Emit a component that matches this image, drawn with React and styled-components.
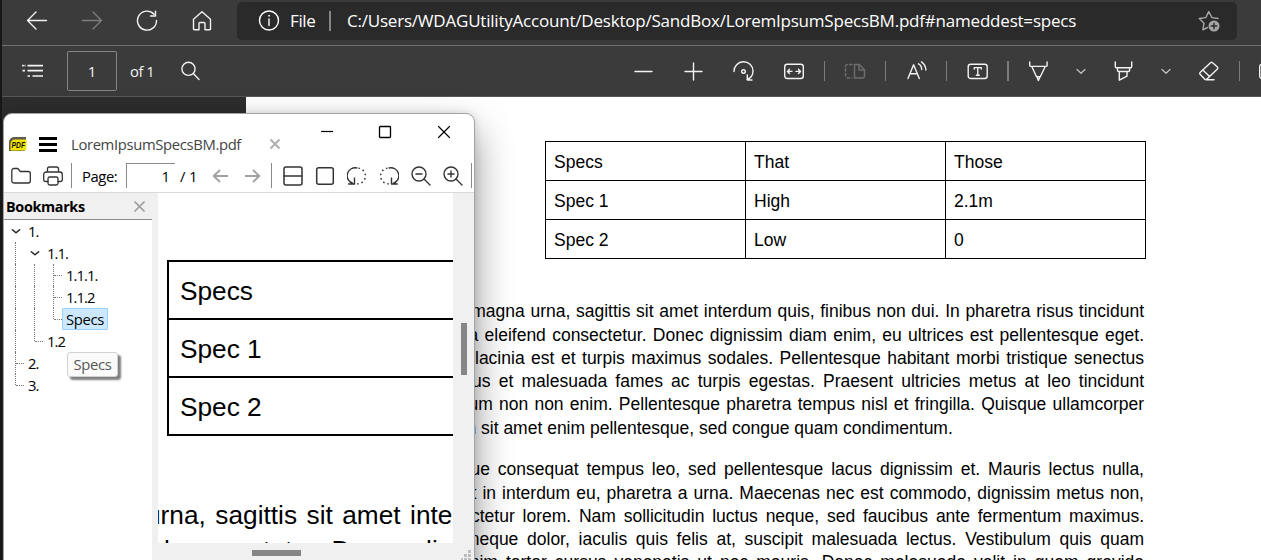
import React from 'react';
import styled, { createGlobalStyle, css } from 'styled-components';

const GlobalStyle = createGlobalStyle`
  * { box-sizing: border-box; }
  body {
    margin: 0;
    overflow: hidden;
    background: #2d2d2d;
  }
`;

const uiFont = '"Open Sans", "Noto Sans", sans-serif';
const docFont = '"Liberation Sans", Arial, sans-serif';

/* ---------- browser ---------- */

const Browser = styled.div`
  position: relative;
  display: flex;
  flex-direction: column;
  width: 1261px;
  height: 560px;
  overflow: hidden;
  border-left: 2px solid #171717;
  background: #2d2d2d;
  font-family: ${uiFont};
`;

const NavBar = styled.div`
  display: flex;
  flex: none;
  height: 46px;
  padding: 2px 24px 0 24px;
  border-bottom: 1px solid #6e6e6e;
  background: #3b3b3b;
`;

const NavButtons = styled.div`
  display: flex;
  gap: 33px;
  width: 211px;
  padding-top: 8px;
  color: #f2f2f2;
`;

const AddressBar = styled.div`
  display: flex;
  align-items: center;
  flex: 1;
  height: 38px;
  padding: 0 17px 0 21px;
  border-radius: 5px;
  background: #2a2a2a;
  color: #fff;
  font-size: 17px;
  white-space: nowrap;
`;

const Scheme = styled.span`
  width: 41px;
  margin-left: 10px;
  padding-bottom: 1px;
  letter-spacing: -0.35px;
  border-right: 2px solid #858585;
  line-height: 19px;
`;

const Address = styled.span`
  flex: 1;
  margin-left: 16px;
  padding-bottom: 2px;
  letter-spacing: -0.21px;
`;

const Toolbar = styled.div`
  display: flex;
  align-items: center;
  flex: none;
  height: 51px;
  overflow: hidden;
  border-bottom: 1px solid #575757;
  background: #3b3b3b;
  color: #f2f2f2;
`;

const Glyph = styled.svg`
  display: block;
  flex: none;
  width: ${(p) => p.$size || 22}px;
  height: ${(p) => p.$size || 22}px;
  margin-left: ${(p) => p.$gap || 0}px;
  color: ${(p) => p.$color || 'inherit'};
  fill: none;
  stroke: currentColor;
  stroke-width: ${(p) => p.$weight || 1.4};
  stroke-linecap: ${(p) => p.$cap || 'round'};
  stroke-linejoin: round;
`;

const Divider = styled.span`
  flex: none;
  width: ${(p) => p.$width || 1}px;
  height: ${(p) => p.$height || 20}px;
  margin-left: ${(p) => p.$gap || 0}px;
  background: ${(p) => p.$color || '#7c7c7c'};
`;

const PageBox = styled.div`
  flex: none;
  width: 50px;
  height: 40px;
  margin: 0 13px 0 23px;
  border: 1px solid #858585;
  border-radius: 2px;
  font-size: 15px;
  line-height: 38px;
  text-align: center;
`;

const PageCount = styled.span`
  flex: none;
  width: 49px;
  font-size: 14.8px;
  letter-spacing: -0.45px;
`;

const Viewer = styled.div`
  flex: 1;
  padding-left: 244px;
  overflow: hidden;
`;

const Paper = styled.div`
  height: 600px;
  padding: 44px 117px 0 0;
  background: #fff;
  color: #000;
  font: 17.5px/23.25px ${docFont};
`;

const SpecTable = styled.div`
  width: 601px;
  margin: 0 -2px 41.3px auto;
  border: solid #000;
  border-width: 1px 0 0 1px;
`;

const SpecRow = styled.div`
  display: grid;
  grid-template-columns: repeat(3, 200px);
  height: 39px;
`;

const SpecCell = styled.div`
  padding: 9px 8px 0;
  border: solid #000;
  border-width: 0 1px 1px 0;
`;

const Paragraph = styled.div`
  margin-bottom: 18.5px;
`;

const Line = styled.div`
  display: flex;
  justify-content: flex-end;
  white-space: pre;
  word-spacing: ${(p) => p.$gap}px;
  padding-right: ${(p) => p.$indent || 0}px;
`;

/* ---------- reader window ---------- */

const Window = styled.div`
  position: absolute;
  left: 1px;
  top: 113px;
  display: flex;
  flex-direction: column;
  width: 472px;
  height: 470px;
  border: 1px solid #a3a3a3;
  border-radius: 9px;
  background: #fff;
  color: #000;
  font-size: 14.8px;
  box-shadow: 0 18px 38px rgba(0, 0, 0, 0.42), 0 0 10px rgba(0, 0, 0, 0.12);
`;

const TitleBar = styled.div`
  display: flex;
  flex: none;
  height: 46px;
`;

const TabArea = styled.div`
  display: flex;
  align-items: center;
  width: 293px;
  height: 28px;
  margin-top: 16px;
  padding-left: 4px;
`;

const MenuBars = styled.div`
  width: 18px;
  height: 15px;
  margin: 0 14px 0 12px;
  border: solid #000;
  border-width: 3px 0;
  background: linear-gradient(#fff 3px, #000 3px, #000 6px, #fff 6px);
`;

const TabName = styled.span`
  width: 197px;
  color: #444;
  letter-spacing: -0.34px;
`;

const Controls = styled.div`
  display: flex;
  align-items: center;
  gap: 44.5px;
  height: 36px;
  margin-left: 22.5px;
`;

const ReaderBar = styled.div`
  display: flex;
  align-items: center;
  flex: none;
  height: 33px;
  padding: 0 0 1px 7px;
  border-bottom: 1px solid #d9d9d9;
  color: #333;
`;

const PageLabel = styled.span`
  width: 44px;
  margin-left: 10px;
  color: #000;
  letter-spacing: -0.4px;
`;

const PageField = styled.div`
  width: 49px;
  height: 25px;
  padding-right: 5px;
  border: solid #8a8a8a;
  border-width: 1px 0 0 1px;
  color: #000;
  line-height: 25px;
  text-align: right;
`;

const PageTotal = styled.span`
  width: 36px;
  padding-left: 5px;
  color: #000;
  letter-spacing: -0.1px;
`;

const Body = styled.div`
  display: flex;
  flex: 1;
  background: #f0f0f0;
  overflow: hidden;
`;

const Sidebar = styled.div`
  display: flex;
  flex-direction: column;
  width: 148px;
`;

const SidebarTitle = styled.div`
  display: flex;
  align-items: center;
  justify-content: space-between;
  height: 27px;
  padding: 0 6px 0 2px;
  border-bottom: 1px solid #8c8c8c;
  font-size: 14.4px;
  font-weight: 700;
  letter-spacing: -0.35px;
`;

const Tree = styled.div`
  flex: 1;
  padding-left: 2px;
  background: #fff;
`;

const TreeRow = styled.div`
  display: flex;
  align-items: center;
  height: 22px;
`;

const Guide = styled.span`
  position: relative;
  width: 19px;
  height: 22px;

  &::before {
    content: '';
    position: absolute;
    left: 9px;
    top: 0;
    height: ${(p) => (p.$kind === 'end' ? 11 : 22)}px;
    border-left: 1px dotted #777;
  }

  ${(p) =>
    p.$kind !== 'pass' &&
    css`
      &::after {
        content: '';
        position: absolute;
        left: 10px;
        top: 11px;
        width: 8px;
        border-top: 1px dotted #777;
      }
    `}
`;

const Twisty = styled.span`
  display: flex;
  align-items: center;
  justify-content: center;
  width: 19px;
`;

const NodeLabel = styled.span`
  height: 22px;
  margin-left: -1px;
  padding: 0 3px;
  border: 1px solid ${(p) => (p.$selected ? '#99d1ff' : 'transparent')};
  border-radius: 1px;
  background: ${(p) => (p.$selected ? '#cce8ff' : 'transparent')};
  letter-spacing: ${(p) => (p.$selected ? -0.35 : -0.95)}px;
  line-height: 20px;
`;

const Tooltip = styled.div`
  position: absolute;
  left: 63px;
  top: 238px;
  width: 51px;
  height: 25px;
  border: 1px solid #d2d2d2;
  border-radius: 3px;
  background: #fafafa;
  box-shadow: 3px 3px 2px rgba(0, 0, 0, 0.5);
  color: #575757;
  letter-spacing: -0.35px;
  line-height: 23px;
  text-align: center;
`;

const CanvasColumn = styled.div`
  width: 295px;
  margin-left: 6px;
`;

const Canvas = styled.div`
  height: 350px;
  padding-top: 67px;
  overflow: hidden;
  background: #fff;
  font: 26.25px/35px ${docFont};
`;

const ZoomTable = styled.div`
  width: 400px;
  margin: 0 0 62px 9px;
  border: solid #000;
  border-width: 2px 0 0 2px;
`;

const ZoomCell = styled.div`
  height: 58px;
  padding: 12px 0 0 11px;
  border-bottom: 2px solid #000;
`;

const ZoomLine = styled.div`
  margin-left: ${(p) => p.$shift}px;
  word-spacing: ${(p) => p.$gap}px;
  white-space: nowrap;
`;

const HThumb = styled.div`
  width: 49px;
  height: 6px;
  margin: 7px 0 0 94px;
  background: #868686;
`;

const ScrollColumn = styled.div`
  display: flex;
  flex: 1;
  flex-direction: column;
  padding: 130px 0 0 8px;
`;

const VThumb = styled.div`
  width: 6px;
  height: 52px;
  margin-bottom: 175px;
  background: #868686;
`;

const rows = [
  ['Specs', 'That', 'Those'],
  ['Spec 1', 'High', '2.1m'],
  ['Spec 2', 'Low', '0'],
];

const paragraphs = [
  [
    { gap: 0.79, text: 'magna urna, sagittis sit amet interdum quis, finibus non dui. In pharetra risus tincidunt' },
    { gap: 1.45, text: 'a eleifend consectetur. Donec dignissim diam enim, eu ultrices est pellentesque eget.' },
    { gap: 1.63, text: 'lacinia est et turpis maximus sodales. Pellentesque habitant morbi tristique senectus' },
    { gap: 3.3, text: 'netus et malesuada fames ac turpis egestas. Praesent ultricies metus at leo tincidunt' },
    { gap: 1.37, text: 'ipsum non non enim. Pellentesque pharetra tempus nisl et fringilla. Quisque ullamcorper' },
    { gap: 0, indent: 191.2, text: 'non sit amet enim pellentesque, sed congue quam condimentum.' },
  ],
  [
    { gap: 3.04, text: 'neque consequat tempus leo, sed pellentesque lacus dignissim et. Mauris lectus nulla,' },
    { gap: 1.14, text: 't in interdum eu, pharetra a urna. Maecenas nec est commodo, dignissim metus non,' },
    { gap: 2.91, text: 'consectetur lorem. Nam sollicitudin luctus neque, sed faucibus ante fermentum maximus.' },
    { gap: 3.82, text: 'neque dolor, iaculis quis felis at, suscipit malesuada lectus. Vestibulum quis quam' },
    { gap: 3.18, text: 'enim tortor cursus venenatis ut nec mauris. Donec malesuada velit in quam gravida' },
  ],
];

const bookmarks = [
  { label: '1.', guides: [], open: true },
  { label: '1.1.', guides: ['pass'], open: true },
  { label: '1.1.1.', guides: ['pass', 'pass', 'tee'] },
  { label: '1.1.2', guides: ['pass', 'pass', 'tee'] },
  { label: 'Specs', guides: ['pass', 'pass', 'end'], selected: true },
  { label: '1.2', guides: ['pass', 'end'] },
  { label: '2.', guides: ['tee'] },
  { label: '3.', guides: ['end'] },
];

const Chevron = ({ gap }) => (
  <Glyph $size={12} $gap={gap} $weight={1.2} $color="#c4c4c4" viewBox="0 0 12 12">
    <path d="M2 4.5 6 8.3 10 4.5" />
  </Glyph>
);

const BrowserNav = () => (
  <NavBar>
    <NavButtons>
      <Glyph viewBox="0 0 22 22"><path d="M20.5 10.5H1.5M10 2 1.5 10.5 10 19" /></Glyph>
      <Glyph $color="#7d7d7d" viewBox="0 0 22 22"><path d="M1.5 10.5h19M12 2l8.5 8.5L12 19" /></Glyph>
      <Glyph viewBox="0 0 22 22">
        <path d="M20.5 10.5A9.5 9.5 0 1 1 18 4.2M19.5 1.3V6h-5" />
      </Glyph>
      <Glyph viewBox="0 0 22 22">
        <path d="M2.5 9.2 11 1.8l8.5 7.4V19a.8.8 0 0 1-.8.8H14v-6.3a1 1 0 0 0-1-1H9a1 1 0 0 0-1 1v6.3H3.3a.8.8 0 0 1-.8-.8z" />
      </Glyph>
    </NavButtons>
    <AddressBar>
      <Glyph viewBox="0 0 22 22">
        <circle cx="11" cy="10.5" r="9.5" />
        <path d="M11 9v6.5" />
        <circle cx="11" cy="5.8" r=".5" fill="currentColor" strokeWidth=".8" />
      </Glyph>
      <Scheme>File</Scheme>
      <Address>C:/Users/WDAGUtilityAccount/Desktop/SandBox/LoremIpsumSpecsBM.pdf#nameddest=specs</Address>
      <Glyph $color="#a6a6a6" viewBox="0 0 22 22">
        <path d="M20 8.5 14 7.6 10.7 1.5 7.8 7.6 1.3 8.5 6 13.2 4.9 19.8 9.5 17.5" />
        <circle cx="16" cy="16" r="5.5" fill="currentColor" stroke="none" />
        <path d="M16 13.2v5.6M13.2 16h5.6" stroke="#2a2a2a" />
      </Glyph>
    </AddressBar>
  </NavBar>
);

const PdfToolbar = () => (
  <Toolbar>
    <Glyph $gap={20} $cap="butt" $weight={1.7} viewBox="0 0 22 22">
      <path d="M0 5.7h1.8M2.5 5.7h1M5.5 5.7H21M.5 10.7h2.5M5.5 10.7H21M5.5 16h2.5M10.5 16H21" />
    </Glyph>
    <PageBox>1</PageBox>
    <PageCount>of 1</PageCount>
    <Glyph viewBox="0 0 22 22">
      <circle cx="9.5" cy="8.8" r="6.6" />
      <path d="M14.3 13.6 20 19.5" />
    </Glyph>
    <Glyph $gap={431} viewBox="0 0 22 22"><path d="M3 11.5h17" /></Glyph>
    <Glyph $gap={28} viewBox="0 0 22 22"><path d="M3 11.5h17M11.5 3v17" /></Glyph>
    <Glyph $gap={28} viewBox="0 0 22 22">
      <path d="M2 11.5a9.500 9.500 0 0 1 19-.5c0 4-2 7-6 8.500M15.300 15v5H20" />
      <circle cx="11.5" cy="11.5" r="1.8" />
    </Glyph>
    <Glyph $gap={29} viewBox="0 0 22 22">
      <rect x="1.7" y="4.3" width="18.6" height="14.2" rx="2.5" />
      <path d="M9 11.4H4.500M6.500 9.300l-2 2.100 2 2.100M13 11.400h4.500M15.500 9.300l2 2.100-2 2.100" />
    </Glyph>
    <Divider $gap={19} />
    <Glyph $gap={19} $color="#6e6e6e" viewBox="0 0 22 22">
      <path d="M8 4.5H3.500a2 2 0 0 0-2 2v9.500a2 2 0 0 0 2 2H8" strokeDasharray="2.5 2.3" />
      <path d="M10.5 4.5h4.700l5.300 5.200V16a2 2 0 0 1-2 2h-8zM15 4.500V10h5.500" />
    </Glyph>
    <Divider $gap={19} />
    <Glyph $gap={20} viewBox="0 0 22 22">
      <path d="M2 18.5 7.600 4.800l5.700 13.700M4 13.700h7.300M12.500 3.800c2 1 3.200 3.500 3.200 5.700M15.500 1.800c2.600 1.800 4.200 4.700 4.400 8.200" />
    </Glyph>
    <Divider $gap={18} />
    <Glyph $gap={20} viewBox="0 0 22 22">
      <rect x="1.2" y="4.3" width="19" height="14.2" rx="2.5" />
      <path d="M7.3 9V7.600h7V9M10.800 7.600v7.600M9.300 15.200h3" />
    </Glyph>
    <Divider $gap={18} $width={2} />
    <Glyph $gap={19} viewBox="0 0 22 22">
      <path d="M1.7 2v3.200c0 .7.5 1.200 1.200 1.200h15c.7 0 1.200-.5 1.200-1.200V2M3.800 6.500l4.700 10.300h3.800L17.200 6.500M9 17l1.400 3.500L11.900 17" />
    </Glyph>
    <Chevron gap={25} />
    <Glyph $gap={26} viewBox="0 0 22 22">
      <path d="M2.3 2v4.500c0 .7.5 1.200 1.200 1.200h14c.7 0 1.200-.5 1.200-1.200V2M2.500 7.600h16M4.500 8v2.200c0 .8.5 1.300 1.300 1.300h9.500c.8 0 1.300-.5 1.300-1.300V8M6.300 11.700v8.500l7.700-4.100v-4.400" />
    </Glyph>
    <Chevron gap={25} />
    <Glyph $gap={26} viewBox="0 0 22 22">
      <path d="M12.5 2.7 2.100 12.400a1.300 1.300 0 0 0 0 1.900l4.700 4.900a1.300 1.300 0 0 0 1.900 0L19.400 9a1.300 1.300 0 0 0 0-1.900l-4.800-4.400a1.500 1.500 0 0 0-2.100 0zM4.800 10l6.800 6.500M8 19.700h8" />
    </Glyph>
    <Divider $gap={19} />
    <Glyph $gap={18} viewBox="0 0 22 22"><rect x="1.7" y="4.3" width="18" height="14.2" rx="2.5" /></Glyph>
  </Toolbar>
);

const SpinArrow = ({ flip }) => (
  <Glyph $size={20} $gap={12} $cap="butt" viewBox="0 0 20 20">
    <g transform={flip ? 'matrix(-1 0 0 1 20 0)' : undefined}>
      <path d="M10.3 2A7.800 7.800 0 0 0 6 17.400M1.200 18h6.300v-6.500" />
      <path d="M11.5 2.100a7.800 7.800 0 0 1-2 15.700" strokeDasharray="1.6 2.9" />
    </g>
  </Glyph>
);

const ReaderWindow = () => (
  <Window>
    <TitleBar>
      <TabArea>
        <Glyph $size={19} viewBox="0 0 19 19">
          <path d="M1 16V7.500A5 5 0 0 1 6 2h12v10.500A3.500 3.500 0 0 1 14.500 16z" fill="#5c5c50" stroke="none" />
          <path d="M2.500 15.500V9A4.500 4.500 0 0 1 7 4.500H18.500V12a3.500 3.500 0 0 1-3.500 3.500z" fill="#f1e400" stroke="none" />
          <text x="3.6" y="13.2" fill="#111" stroke="none" fontFamily="Liberation Sans" fontWeight="700" fontStyle="italic" fontSize="8.5" textLength="13.5" lengthAdjust="spacingAndGlyphs">PDF</text>
        </Glyph>
        <MenuBars />
        <TabName>LoremIpsumSpecsBM.pdf</TabName>
        <Glyph $size={14} $weight={2} $color="#b0b0b0" $cap="butt" viewBox="0 0 14 14">
          <path d="M2.500 2.500 11.500 11.500M11.500 2.500 2.500 11.500" />
        </Glyph>
      </TabArea>
      <Controls>
        <Glyph $size={14} $cap="butt" $weight={1.2} viewBox="0 0 14 14"><path d="M1 6.500h12" /></Glyph>
        <Glyph $size={14} $weight={1.3} viewBox="0 0 14 14"><rect x="1.5" y="1.5" width="11" height="11" rx=".8" /></Glyph>
        <Glyph $size={14} $weight={1.2} viewBox="0 0 14 14"><path d="M1.500 1.500l11 11M12.500 1.500l-11 11" /></Glyph>
      </Controls>
    </TitleBar>
    <ReaderBar>
      <Glyph $size={20} $weight={1.3} viewBox="0 0 20 20">
        <path d="M.8 15V4.500a2 2 0 0 1 2-2h4l2.500 3h8a2 2 0 0 1 2 2V15a2 2 0 0 1-2 2H2.800a2 2 0 0 1-2-2z" />
      </Glyph>
      <Glyph $size={20} $gap={12} $weight={1.3} viewBox="0 0 20 20">
        <path d="M4.500 6V3a2 2 0 0 1 2-2h7a2 2 0 0 1 2 2v3M5 15.500H2.500a1.800 1.800 0 0 1-1.800-1.800V8.500A2.500 2.500 0 0 1 3.200 6h13.600a2.500 2.500 0 0 1 2.500 2.500v5.200a1.800 1.800 0 0 1-1.800 1.800H15" />
        <rect x="5" y="11" width="10" height="8" rx="1.8" />
      </Glyph>
      <Divider $gap={8} $height={25} $color="#8a8a8a" />
      <PageLabel>Page:</PageLabel>
      <PageField>1</PageField>
      <PageTotal>/ 1</PageTotal>
      <Glyph $size={18} $weight={1.8} $color="#a0a0a0" $cap="butt" viewBox="0 0 18 18"><path d="M17 9H3M9 3 2.700 9 9 15" /></Glyph>
      <Glyph $size={18} $gap={15} $weight={1.8} $color="#a0a0a0" $cap="butt" viewBox="0 0 18 18"><path d="M1 9h14M9 3l6.300 6L9 15" /></Glyph>
      <Divider $gap={9} $height={25} $color="#8a8a8a" />
      <Glyph $size={20} $gap={11} $weight={1.5} viewBox="0 0 20 20">
        <rect x="1" y="1" width="18" height="18" rx="2" /><path d="M1 10h18" />
      </Glyph>
      <Glyph $size={20} $gap={12} $weight={1.5} viewBox="0 0 20 20"><rect x="1.7" y="1.7" width="16.6" height="16.6" rx="2" /></Glyph>
      <SpinArrow />
      <SpinArrow flip />
      <Glyph $size={20} $gap={12} viewBox="0 0 20 20">
        <circle cx="8" cy="8" r="7" /><path d="M5 8h6M13 13l6 6" />
      </Glyph>
      <Glyph $size={20} $gap={12} viewBox="0 0 20 20">
        <circle cx="8" cy="8" r="7" /><path d="M5 8h6M8 5v6M13 13l6 6" />
      </Glyph>
      <Divider $gap={8} $height={25} $color="#8a8a8a" />
    </ReaderBar>
    <Body>
      <Sidebar>
        <SidebarTitle>
          Bookmarks
          <Glyph $size={13} $weight={1.7} $color="#9c9c9c" $cap="butt" viewBox="0 0 13 13">
            <path d="M1.500 1.500l10 10M11.500 1.500l-10 10" />
          </Glyph>
        </SidebarTitle>
        <Tree>
          {bookmarks.map((node) => (
            <TreeRow key={node.label}>
              {node.guides.map((kind, i) => (
                <Guide key={i} $kind={kind} />
              ))}
              {node.open && (
                <Twisty>
                  <Glyph $size={12} $weight={1.5} $color="#222" viewBox="0 0 12 12"><path d="M2.300 4.700 6 7.800 9.700 4.700" /></Glyph>
                </Twisty>
              )}
              <NodeLabel $selected={node.selected}>{node.label}</NodeLabel>
            </TreeRow>
          ))}
        </Tree>
      </Sidebar>
      <CanvasColumn>
        <Canvas>
          <ZoomTable>
            {rows.map(([name]) => (
              <ZoomCell key={name}>{name}</ZoomCell>
            ))}
          </ZoomTable>
          <ZoomLine $shift={-12} $gap={2.2}>urna, sagittis sit amet inte</ZoomLine>
          <ZoomLine $shift={-80} $gap={2.7}>eleifend consectetur. Donec di</ZoomLine>
        </Canvas>
        <HThumb />
      </CanvasColumn>
      <ScrollColumn>
        <VThumb />
        <Glyph $size={12} viewBox="0 0 12 12">
          <path d="M7 0h3v3H7zM3 4h3v3H3zM7 4h3v3H7zM-1 8h3v3h-3zM3 8h3v3H3zM7 8h3v3H7z" fill="#bdbdbd" stroke="none" />
        </Glyph>
      </ScrollColumn>
    </Body>
    <Tooltip>Specs</Tooltip>
  </Window>
);

const App = () => (
  <Browser>
    <GlobalStyle />
    <BrowserNav />
    <PdfToolbar />
    <Viewer>
      <Paper>
        <SpecTable>
          {rows.map((row) => (
            <SpecRow key={row[0]}>
              {row.map((cell) => (
                <SpecCell key={cell}>{cell}</SpecCell>
              ))}
            </SpecRow>
          ))}
        </SpecTable>
        {paragraphs.map((lines, i) => (
          <Paragraph key={i}>
            {lines.map((line) => (
              <Line key={line.text} $gap={line.gap} $indent={line.indent}>{line.text}</Line>
            ))}
          </Paragraph>
        ))}
      </Paper>
    </Viewer>
    <ReaderWindow />
  </Browser>
);

export default App;
